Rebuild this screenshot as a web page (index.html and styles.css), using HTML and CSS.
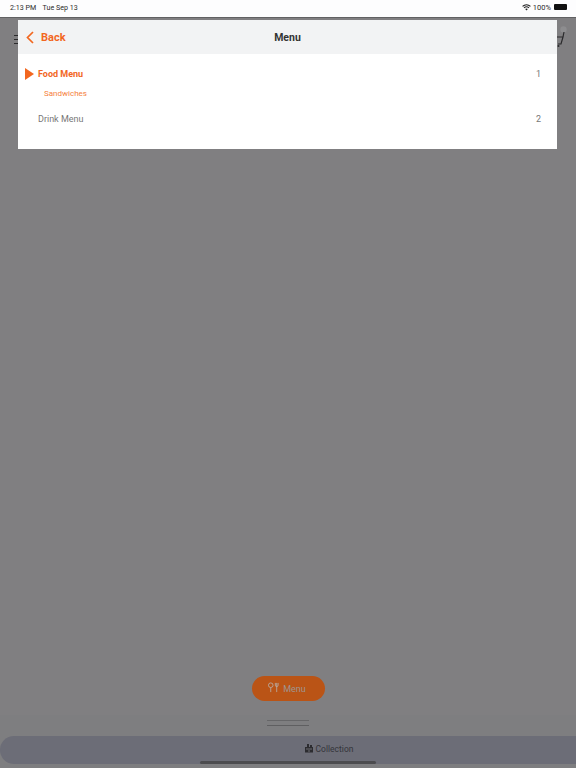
FILE: index.html
```html
<!DOCTYPE html>
<html lang="en">
<head>
<meta charset="utf-8">
<title>Menu</title>
<link rel="stylesheet" href="styles.css">
</head>
<body>
<div class="screen">
  <div class="status">
    <div class="status-left"><span>2:13 PM</span><span>Tue Sep 13</span></div>
    <div class="status-right">
      <svg class="wifi" viewBox="0 0 12 9" width="9" height="7"><path d="M6 8.600 4.200 6.600a2.600 2.600 0 0 1 3.600 0zM3.200 5.600 2.200 4.500a5.600 5.600 0 0 1 7.600 0L8.800 5.600a4.100 4.100 0 0 0-5.600 0zM1.300 3.500.2 2.400a8.500 8.500 0 0 1 11.600 0L10.700 3.500a7 7 0 0 0-9.400 0z" fill="#222"/></svg>
      <span>100%</span>
      <span class="battery"></span>
    </div>
  </div>
  <div class="page">
    <div class="page-head">
      <svg class="burger" viewBox="0 0 6 9" width="6" height="9"><path d="M0 .5h6M0 4.500h6M0 8.500h6" stroke="#2a2a2c" stroke-width="1.200"/></svg>
      <svg class="cart" viewBox="0 0 12 22" width="12" height="22"><circle cx="8.500" cy="4.500" r="3.200" fill="#8d8d8f"/><path d="M1 12h7l-2 7H3M8 12l1-5" fill="none" stroke="#2a2a2c" stroke-width="1.200"/><circle cx="3.500" cy="21" r="1" fill="#2a2a2c"/></svg>
    </div>
    <div class="bottom">
      <div class="fab-row">
        <div class="fab">
          <svg viewBox="0 0 12 12" width="11" height="11"><path d="M3 1a2 2 0 0 0 0 5 2 2 0 0 0 0-5zM3 6v5M8 1v2.500a1.500 1.500 0 0 0 3 0V1M9.500 1v10" fill="none" stroke="#b9afa9" stroke-width=".9"/></svg>
          <span>Menu</span>
        </div>
      </div>
      <div class="sheet">
        <div class="handle"></div>
        <div class="tab-bar">
          <svg viewBox="0 0 10 10" width="10" height="10"><path d="M1 4h8v5.500H1zM3 1h2v3H3zM6 2h2v2H6z" fill="#2c2c30"/><path d="M2 6h6M4 8h2" stroke="#8a8a90" stroke-width=".7"/></svg>
          <span>Collection</span>
        </div>
        <div class="home-strip"><div class="home"></div></div>
      </div>
    </div>
    <div class="modal">
      <div class="modal-head">
        <div class="back">
          <svg viewBox="0 0 8 13" width="8" height="13"><path d="M7 1 1.500 6.500 7 12" fill="none" stroke="#f2671f" stroke-width="1.700"/></svg>
          <span>Back</span>
        </div>
        <div class="modal-title">Menu</div>
      </div>
      <div class="list">
        <div class="row row-active">
          <span class="arrow"></span>
          <span class="row-name">Food Menu</span>
          <span class="row-num">1</span>
        </div>
        <div class="sub">Sandwiches</div>
        <div class="row row-plain">
          <span class="row-name">Drink Menu</span>
          <span class="row-num">2</span>
        </div>
      </div>
    </div>
  </div>
</div>
</body>
</html>
```
FILE: styles.css
```css
* { box-sizing: border-box; }
html, body { margin: 0; padding: 0; }
body { width: 576px; height: 768px; overflow: hidden; font-family: Roboto, "Liberation Sans", sans-serif; background: #7f7e80; }
.screen { width: 576px; height: 768px; display: flex; flex-direction: column; }

.status { height: 17px; flex: none; background: #fdfdfe; display: flex; justify-content: space-between; align-items: center; padding: 0 9px 3px 10px; font-size: 7.1px; color: #2b2b2b; }
.status-left { display: flex; gap: 6.500px; }
.status-right { display: flex; align-items: center; gap: 2px; font-size: 7.5px; }
.battery { width: 13px; height: 6px; margin-left: 1px; background: #111; border-radius: 1px; }

.page { flex: 1; position: relative; display: flex; flex-direction: column; justify-content: space-between; border-top: 1.500px solid #616163; background: #807f81; }
.page-head { display: flex; justify-content: space-between; align-items: flex-start; padding: 0 9px 0 14px; height: 60px; }
.burger { margin-top: 17px; }
.cart { margin-top: 7px; }

.bottom { display: flex; flex-direction: column; }
.fab-row { display: flex; justify-content: center; padding-bottom: 14px; }
.fab { width: 73px; height: 25px; border-radius: 13px; background: #ba5416; display: flex; align-items: center; justify-content: center; gap: 4px; padding-right: 2px; font-size: 9px; color: #9d9590; }
.fab svg { margin-bottom: 3px; }
.sheet { background: #7e7e80; height: 53px; display: flex; flex-direction: column; }
.handle { width: 42px; height: 6px; margin: 5px auto 0; border-top: 1px solid #666668; border-bottom: 1px solid #5f5f61; }
.tab-bar { margin-top: 10px; height: 28px; background: #6c6d77; border-radius: 14px 0 0 14px; display: flex; align-items: flex-start; justify-content: center; gap: 2px; padding: 8px 0 0 81px; font-size: 8.500px; color: #35353a; }
.tab-bar svg { margin-top: -1px; }
.home-strip { flex: 1; display: flex; justify-content: center; }
.home { width: 176px; height: 3px; margin-top: -3px; border-radius: 2px; background: #4c4c4f; }

.modal { position: absolute; left: 18px; top: 1.500px; width: 539px; height: 129px; background: #fff; display: flex; flex-direction: column; }
.modal-head { height: 34px; flex: none; background: #f2f3f4; position: relative; display: flex; align-items: center; justify-content: center; padding-top: 1px; }
.back { position: absolute; left: 8px; top: 1px; height: 34px; display: flex; align-items: center; gap: 7px; color: #f2671f; font-size: 11px; font-weight: 700; }
.modal-title { font-size: 10.500px; font-weight: 700; color: #333; }
.list { padding-top: 11px; }
.row { position: relative; display: flex; justify-content: space-between; align-items: center; padding: 0 16px 0 20px; height: 18px; font-size: 9px; }
.row-num { color: #777; font-weight: 400; }
.row-active .row-name { color: #f2671f; font-weight: 700; }
.row-plain .row-name { color: #777; }
.row-plain { margin-top: 10px; }
.arrow { position: absolute; left: 7px; top: 3px; border-left: 9px solid #f2671f; border-top: 6px solid transparent; border-bottom: 6px solid transparent; }
.sub { margin: 5.500px 0 0 26px; height: 12px; line-height: 12px; font-size: 8px; color: #f5803d; }
```
